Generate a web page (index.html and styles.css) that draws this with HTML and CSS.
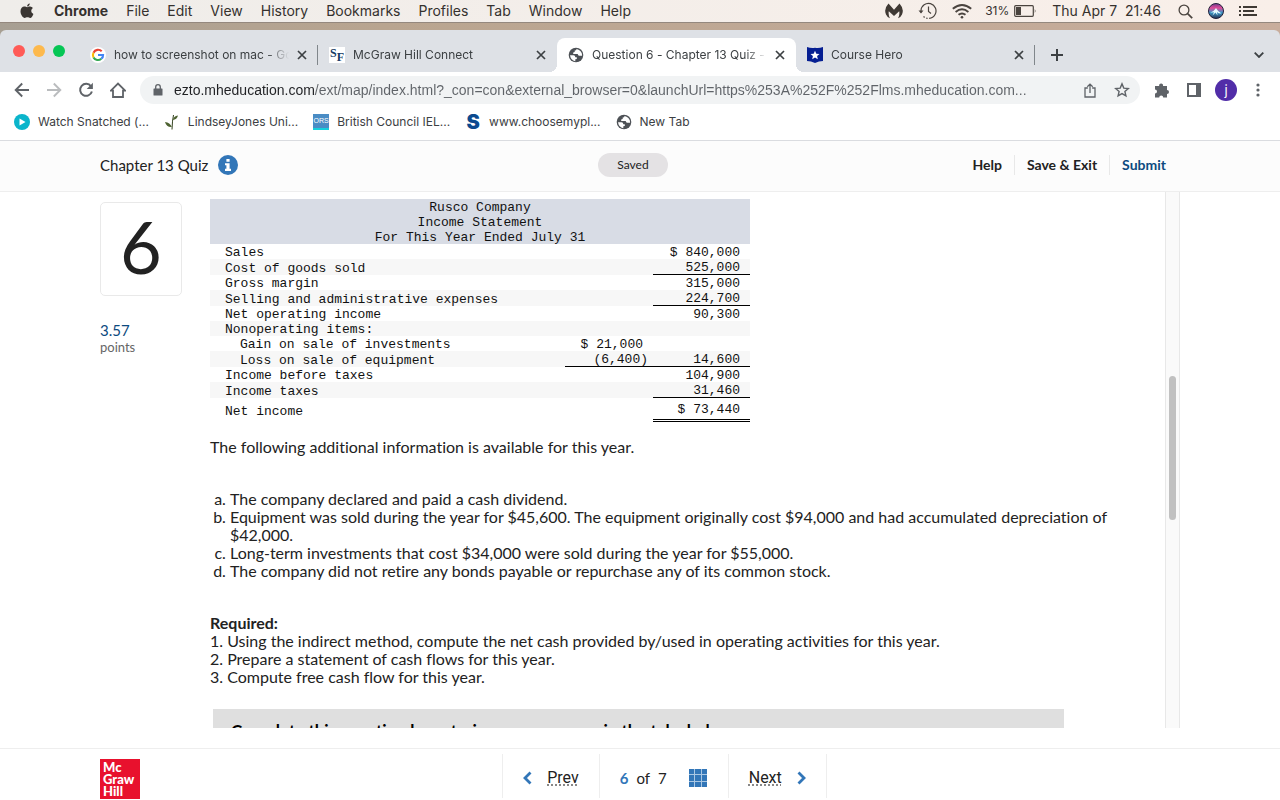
FILE: index.html
```
<!DOCTYPE html>
<html lang="en">
<head>
    <meta charset="UTF-8">
    <meta name="viewport" content="width=device-width, initial-scale=1.0">
    <title>Question 6 - Chapter 13 Quiz</title>
    <link rel="stylesheet" href="styles.css">
</head>
<body>
    <!-- Shared icons -->
    <svg class="defs" width="0" height="0">
        <symbol id="close" viewBox="0 0 10 10"><path d="M1 1l8 8M9 1l-8 8" fill="none" stroke="#3c4043" stroke-width="1.7"/></symbol>
        <symbol id="globe" viewBox="0 0 16 16">
            <circle cx="8" cy="8" r="7.3" fill="#4d5156"/>
            <path d="M2 8.300h3.500q1.800.1 1.800 1.900l1.500.1v1.700l-1.500.3v1.900Q2.800 13.500 2 8.300zM8.600 1.900q-.2 1.700-1.900 1.600v1.600l-1.500.3v1.500h4.500q.3 1.900 1.500 1.800h2.900Q14.200 3.300 8.600 1.900z" fill="#fff"/>
        </symbol>
    </svg>

    <!-- Mac menu bar -->
    <header class="menubar">
        <nav class="menus">
            <svg class="apple" width="14" height="16" viewBox="0 0 14 16" fill="#3a3633"><path d="M9.800.4c.1 1.500-1.200 3-2.700 3C6.900 1.900 8.300.5 9.800.4zM7.200 4.300c.7 0 1.500-.7 2.900-.7 1.200.1 2.200.6 2.800 1.500-2.400 1.500-2 4.800.5 5.800-.7 1.900-1.900 4-3.200 4-1.100 0-1.500-.6-2.800-.6s-1.700.6-2.700.6C2.800 14.900.5 11.600.5 8.300c0-3.100 1.900-4.700 3.800-4.700 1.300 0 2.100.7 2.900.7z"/></svg>
            <button class="app">Chrome</button>
            <button>File</button>
            <button>Edit</button>
            <button>View</button>
            <button>History</button>
            <button>Bookmarks</button>
            <button>Profiles</button>
            <button>Tab</button>
            <button>Window</button>
            <button>Help</button>
        </nav>
        <div class="status">
            <svg width="18" height="16" viewBox="0 0 18 16" fill="#3f3934"><path d="M3.500.5Q-1.500 6 1 11.500q1 2.500 4 3.800-1.900-3.400-1.200-7.100L9 13l5.200-4.800q.7 3.700-1.200 7.100 3-1.300 4-3.800 2.500-5.500-2.500-11L9 6.800z"/></svg>
            <svg class="clock" width="19" height="18" viewBox="0 0 19 18" fill="none" stroke="#4a443f" stroke-width="1.200"><path d="M3 10.500V8.500a7.500 7.500 0 1 1 2.500 6" stroke-dasharray="36 1.500 1.500 1.500"/><path d="M.5 8.500h5L3 11.500z" fill="#4a443f" stroke="none"/><path d="M10.500 4.500v5l2.500 2"/></svg>
            <svg class="wifi" width="20" height="15" viewBox="0 0 20 15" fill="none" stroke="#4a443f" stroke-width="1.900"><path d="M.8 4.800q9.200-7.600 18.400 0M3.600 7.900q6.400-5.200 12.800 0M6.500 10.800q3.500-2.700 7 0"/><circle cx="10" cy="13.200" r="1.300" fill="#4a443f" stroke="none"/></svg>
            <span class="percent">31%</span>
            <svg width="23" height="12" viewBox="0 0 23 12"><rect x=".7" y=".7" width="18.600" height="10.600" rx="1" fill="none" stroke="#4a443f" stroke-width="1.200"/><path d="M2 2h5v8H2zM20.800 4q1.500 2 0 4z" fill="#4a443f"/></svg>
            <span class="date">Thu Apr 7&nbsp; 21:46</span>
            <svg width="15" height="15" viewBox="0 0 15 15" fill="none" stroke="#4a443f" stroke-width="1.300"><circle cx="6" cy="6" r="4.900"/><path d="M9.600 9.600l4.600 4.600" stroke-width="1.700"/></svg>
            <svg class="siri" width="16" height="16" viewBox="0 0 16 16">
                <defs><linearGradient id="siri" x1="0" y1="0" x2="0" y2="1"><stop offset="0" stop-color="#6b3e8f"/><stop offset=".3" stop-color="#e24a98"/><stop offset=".6" stop-color="#3b98c8"/><stop offset="1" stop-color="#26304f"/></linearGradient></defs>
                <circle cx="8" cy="8" r="7.500" fill="url(#siri)" stroke="#22203a"/>
                <path d="M2.500 9.500Q6 8.500 8 5q2 4 5.500 5.500-3.500 0-4.500-1.500l.5 3.500L7.500 9.500 4.500 12.500l1.500-3.200z" fill="#e8fbff"/>
            </svg>
            <svg width="19" height="12" viewBox="0 0 19 12" fill="#3f3934"><path d="M0 1h2v2H0zM0 5h2v2H0zM0 9h2v2H0zM4 1h14v2H4zM4 5h11v2H4zM4 9h14v2H4z"/></svg>
        </div>
    </header>

    <!-- Browser chrome -->
    <section class="browser">
        <div class="tabstrip">
            <div class="lights"><span class="red"></span><span class="yellow"></span><span class="green"></span></div>
            <div class="tab sep">
                <svg width="16" height="16" viewBox="0 0 16 16" fill="none" stroke-width="2.100"><circle cx="8" cy="8" r="8" fill="#fff"/><path d="M11.700 4.300A5.100 5.100 0 0 0 3.500 5.700" stroke="#ea4335"/><path d="M3.500 5.700a5.100 5.100 0 0 0 0 4.700" stroke="#fbbc05"/><path d="M3.500 10.400a5.100 5.100 0 0 0 7.800 1.400" stroke="#34a853"/><path d="M11.300 11.800Q13.200 10.200 13.100 8H8" stroke="#4285f4"/></svg>
                <span class="name">how to screenshot on mac - Google Search</span>
                <button aria-label="Close tab"><svg width="10" height="10"><use href="#close"/></svg></button>
            </div>
            <div class="tab">
                <span class="sf"><span>S</span><span class="f">F</span></span>
                <span class="name">McGraw Hill Connect</span>
                <button aria-label="Close tab"><svg width="10" height="10"><use href="#close"/></svg></button>
            </div>
            <div class="tab active">
                <svg width="16" height="16"><use href="#globe"/></svg>
                <span class="name">Question 6 - Chapter 13 Quiz - Connect</span>
                <button aria-label="Close tab"><svg width="10" height="10"><use href="#close"/></svg></button>
            </div>
            <div class="tab sep">
                <svg width="16" height="16" viewBox="0 0 16 16"><path d="M0 0q4 1.500 8 .8Q12 1.500 16 0v14q-4 0-8 2-4-2-8-2z" fill="#061f92"/><path d="M8 3.800l1.300 2.900 3.200.3-2.400 2.100.7 3.100L8 10.600l-2.800 1.600.7-3.100L3.500 7l3.200-.3z" fill="#fff"/></svg>
                <span class="name">Course Hero</span>
                <button aria-label="Close tab"><svg width="10" height="10"><use href="#close"/></svg></button>
            </div>
            <button class="newtab" aria-label="New tab"><svg width="12" height="12" viewBox="0 0 12 12"><path d="M6 0v12M0 6h12" stroke="#3c4043" stroke-width="2"/></svg></button>
            <button class="tabsearch" aria-label="Search tabs"><svg width="10" height="6" viewBox="0 0 10 6"><path d="M.7.7L5 5 9.300.7" fill="none" stroke="#3c4043" stroke-width="1.800"/></svg></button>
        </div>

        <div class="toolbar">
            <button aria-label="Back"><svg width="16" height="16" viewBox="0 0 16 16" fill="none" stroke="#5f6368" stroke-width="1.900"><path d="M15 8H2M8.200 1.500L1.700 8l6.500 6.500"/></svg></button>
            <button aria-label="Forward"><svg width="16" height="16" viewBox="0 0 16 16" fill="none" stroke="#babcbe" stroke-width="1.900"><path d="M1 8h13M7.800 1.500L14.300 8l-6.500 6.500"/></svg></button>
            <button aria-label="Reload"><svg width="16" height="16" viewBox="0 0 16 16"><path d="M13 4.300A6 6 0 1 0 13.900 9.500" fill="none" stroke="#5f6368" stroke-width="2"/><path d="M14.900.8V7H8.700z" fill="#5f6368"/></svg></button>
            <button aria-label="Home"><svg width="16" height="16" viewBox="0 0 16 16"><path d="M.9 8.600L8 1.500l7.100 7.100H13V15H3V8.600z" fill="none" stroke="#5f6368" stroke-width="1.800"/></svg></button>
            <div class="omnibox">
                <svg width="10" height="12" viewBox="0 0 10 12"><path d="M1 4.500h8q.5 0 .5.500v6q0 .5-.5.500H1q-.5 0-.5-.500V5q0-.500.5-.500z" fill="#5f6368"/><path d="M2.700 5V3a2.300 2.300 0 0 1 4.600 0v2" fill="none" stroke="#5f6368" stroke-width="1.300"/></svg>
                <input type="text" aria-label="Address" value="ezto.mheducation.com/ext/map/index.html?_con=con&amp;external_browser=0&amp;launchUrl=https%253A%252F%252Flms.mheducation.com...">
                <button aria-label="Share"><svg width="12" height="15" viewBox="0 0 12 15" fill="none" stroke="#5f6368" stroke-width="1.300"><path d="M3.800 5H1v9h10V5H8.200M6 10V1.200M3.300 3.800L6 1.100l2.700 2.700"/></svg></button>
                <button aria-label="Bookmark"><svg width="16" height="16" viewBox="0 0 16 16"><path d="M8 1.900l1.800 4.200 4.500.4-3.400 3 1 4.400L8 11.600l-3.900 2.300 1-4.400-3.400-3 4.500-.4z" fill="none" stroke="#5f6368" stroke-width="1.400"/></svg></button>
            </div>
            <button aria-label="Extensions"><svg width="16" height="16" viewBox="0 0 16 16"><path d="M1 4h4.200a2 2 0 1 1 3.800 0H13v4a2 2 0 1 1 0 4v3.500H9.200a2 2 0 1 0-4 0H1v-4a2 2 0 1 0 0-4z" fill="#5f6368"/></svg></button>
            <button aria-label="Side panel"><svg width="14" height="14" viewBox="0 0 14 14"><path d="M0 0h14v14H0zM2 2v10h7V2z" fill="#5f6368" fill-rule="evenodd"/></svg></button>
            <button class="avatar" aria-label="Profile">j</button>
            <button aria-label="Menu"><svg width="4" height="14" viewBox="0 0 4 14" fill="#5f6368"><circle cx="2" cy="2" r="1.600"/><circle cx="2" cy="7" r="1.600"/><circle cx="2" cy="12" r="1.600"/></svg></button>
        </div>

        <nav class="bookmarks">
            <a href="#"><svg width="16" height="16" viewBox="0 0 16 16"><circle cx="8" cy="8" r="8" fill="#0bb5cb"/><path d="M5.500 4.500v7l6-3.500z" fill="#fff"/></svg><span>Watch Snatched (...</span></a>
            <a href="#"><svg width="16" height="16" viewBox="0 0 16 16"><path d="M8 15.500Q8.300 6 9.500 1" fill="none" stroke="#34421f"/><path d="M1 8q5 .5 6.800 5Q2.500 13.500 1 8zM8.800 6Q9.500 2 14 1.500 13 5.500 8.800 6z" fill="#4d6231"/></svg><span>LindseyJones Uni...</span></a>
            <a href="#"><span class="ors">ORS</span><span>British Council IEL...</span></a>
            <a href="#"><span class="s-logo">S</span><span>www.choosemypl...</span></a>
            <a href="#"><svg width="16" height="16"><use href="#globe"/></svg><span>New Tab</span></a>
        </nav>
    </section>

    <!-- Quiz header -->
    <header class="quiz-header">
        <div class="wrap">
            <div class="title">
                <h1>Chapter 13 Quiz</h1>
                <button aria-label="Info"><svg width="20" height="20" viewBox="0 0 20 20"><circle cx="10" cy="10" r="10" fill="#3276b8"/><path d="M8.400 4h3.200v2.700H8.400zM7 8.200h4.600v5.600H13V16H7v-2.200h1.400v-3.500H7z" fill="#fff"/></svg></button>
            </div>
            <span class="saved">Saved</span>
            <nav class="actions">
                <a href="#">Help</a>
                <a href="#">Save &amp; Exit</a>
                <a href="#" class="submit">Submit</a>
            </nav>
        </div>
    </header>

    <main class="wrap quiz">
        <aside>
            <div class="number">6</div>
            <div class="score">3.57</div>
            <div class="points">points</div>
        </aside>

        <article>
            <table>
                <thead>
                    <tr><th colspan="3">Rusco Company</th></tr>
                    <tr><th colspan="3">Income Statement</th></tr>
                    <tr><th colspan="3">For This Year Ended July 31</th></tr>
                </thead>
                <tbody>
                    <tr><td>Sales</td><td></td><td>$ 840,000</td></tr>
                    <tr><td>Cost of goods sold</td><td></td><td class="line">525,000</td></tr>
                    <tr><td>Gross margin</td><td></td><td>315,000</td></tr>
                    <tr><td>Selling and administrative expenses</td><td></td><td class="line">224,700</td></tr>
                    <tr><td>Net operating income</td><td></td><td>90,300</td></tr>
                    <tr><td>Nonoperating items:</td><td></td><td></td></tr>
                    <tr><td class="indent">Gain on sale of investments</td><td>$ 21,000</td><td></td></tr>
                    <tr><td class="indent">Loss on sale of equipment</td><td class="line negative">(6,400)</td><td class="line">14,600</td></tr>
                    <tr><td>Income before taxes</td><td></td><td>104,900</td></tr>
                    <tr><td>Income taxes</td><td></td><td class="line">31,460</td></tr>
                    <tr><td>Net income</td><td></td><td class="double">$ 73,440</td></tr>
                </tbody>
            </table>

            <p class="intro">The following additional information is available for this year.</p>

            <ol class="info">
                <li>The company declared and paid a cash dividend.</li>
                <li>Equipment was sold during the year for $45,600. The equipment originally cost $94,000 and had accumulated depreciation of $42,000.</li>
                <li>Long-term investments that cost $34,000 were sold during the year for $55,000.</li>
                <li>The company did not retire any bonds payable or repurchase any of its common stock.</li>
            </ol>

            <p class="required">
                <strong>Required:</strong><br>
                1. Using the indirect method, compute the net cash provided by/used in operating activities for this year.<br>
                2. Prepare a statement of cash flows for this year.<br>
                3. Compute free cash flow for this year.
            </p>

            <div class="complete">Complete this question by entering your answers in the tabs below.</div>
        </article>

        <div class="scrollbar"><div class="thumb"></div></div>
    </main>

    <footer>
        <div class="wrap">
            <a href="#" class="logo">Mc<br>Graw<br>Hill</a>
            <nav class="pager">
                <a href="#"><svg width="9" height="14" viewBox="0 0 9 14"><path d="M7.500 1.500L2 7l5.500 5.500" fill="none" stroke="#3276b8" stroke-width="2.800"/></svg><span>Prev</span></a>
                <div class="count"><b>6</b><span>of</span><span>7</span>
                    <button aria-label="Question list"><svg width="18" height="18" viewBox="0 0 18 18"><path d="M0 0h18v18H0z" fill="#a9c7e3"/><path d="M0 0h5v5H0zM6 0h6v5H6zM13 0h5v5h-5zM0 6h5v6H0zM6 6h6v6H6zM13 6h5v6h-5zM0 13h5v5H0zM6 13h6v5H6zM13 13h5v5h-5z" fill="#3276b8"/></svg></button>
                </div>
                <a href="#"><span>Next</span><svg width="9" height="14" viewBox="0 0 9 14"><path d="M1.500 1.500L7 7l-5.500 5.500" fill="none" stroke="#3276b8" stroke-width="2.800"/></svg></a>
            </nav>
        </div>
    </footer>
</body>
</html>
```
FILE: styles.css
```
* {
    box-sizing: border-box;
}
body {
    margin: 0;
    height: 100vh;
    display: flex;
    flex-direction: column;
    overflow: hidden;
    font-family: Lato, sans-serif;
    font-size: 16px;
    line-height: 18px;
    font-variant-ligatures: none;
    color: #222222;
    background-color: #ffffff;
}
button {
    display: flex;
    align-items: center;
    justify-content: center;
    margin: 0;
    padding: 0;
    border: none;
    background: none;
    font: inherit;
    color: inherit;
    cursor: pointer;
}
svg {
    flex: none;
    display: block;
}
a {
    color: inherit;
    text-decoration: none;
}
.defs {
    position: absolute;
}

/* menu bar */
.menubar {
    flex: none;
    height: 23px;
    display: flex;
    justify-content: space-between;
    padding: 0 22px 0 20px;
    border-bottom: 1px solid #94887e;
    background: linear-gradient(to right, #efedea, #f9efe9);
    font-family: Inter, sans-serif;
    font-size: 14px;
    color: #35312e;
}
.menus, .status {
    display: flex;
    align-items: center;
}
.menus {
    gap: 18px;
}
.menus .app {
    margin-left: 2px;
    font-weight: bold;
}
.status {
    gap: 15px;
}
.wifi {
    margin-right: -2px;
}
.percent {
    margin-right: -10px;
    font-size: 12px;
}
.date {
    margin-right: 2px;
}

/* browser */
.browser {
    flex: none;
    padding-top: 7px;
    background: linear-gradient(to right, #a79f93, #b9a590 30%, #c8ad9c);
    font-family: Inter, sans-serif;
    color: #3c4043;
}
.tabstrip {
    height: 42px;
    display: flex;
    padding: 8px 16px 0 13px;
    border-radius: 6px 6px 0 0;
    background-color: #dee1e6;
    font-size: 12px;
}
.lights {
    flex: none;
    width: 66px;
    display: flex;
    gap: 8px;
    padding-top: 7px;
}
.lights span {
    width: 12px;
    height: 12px;
    border-radius: 50%;
}
.lights .red {
    background-color: #ff5b57;
}
.lights .yellow {
    background-color: #fdb94d;
}
.lights .green {
    background-color: #05c655;
}
.tab {
    flex: 0 1 239px;
    min-width: 0;
    display: flex;
    align-items: center;
    gap: 8px;
    padding: 0 11px;
    position: relative;
}
.tab.active {
    border-radius: 8px 8px 0 0;
    background-color: #ffffff;
}
.tab.active::before, .tab.active::after {
    content: "";
    position: absolute;
    bottom: 0;
    width: 8px;
    height: 8px;
}
.tab.active::before {
    right: 100%;
    background: radial-gradient(circle at 0 0, transparent 8px, #ffffff 8px);
}
.tab.active::after {
    left: 100%;
    background: radial-gradient(circle at 100% 0, transparent 8px, #ffffff 8px);
}
.tab.sep::after {
    content: "";
    position: absolute;
    right: 0;
    top: 7px;
    width: 1px;
    height: 20px;
    background-color: #80868b;
}
.tab .name {
    flex: 1;
    overflow: hidden;
    white-space: nowrap;
    -webkit-mask-image: linear-gradient(to right, #000 calc(100% - 22px), transparent);
    mask-image: linear-gradient(to right, #000 calc(100% - 22px), transparent);
}
.sf {
    width: 16px;
    height: 16px;
    display: flex;
    justify-content: center;
    background-color: #ffffff;
    font-family: "Liberation Serif", serif;
    font-size: 12px;
    line-height: 12px;
    font-weight: bold;
    color: #163a63;
}
.sf .f {
    padding-top: 4px;
}
.newtab {
    width: 44px;
}
.tabsearch {
    margin-left: auto;
}
.toolbar {
    height: 36px;
    display: flex;
    align-items: center;
    gap: 8px;
    padding: 0 10px;
    background-color: #ffffff;
}
.toolbar button {
    flex: none;
    width: 24px;
    height: 24px;
}
.omnibox {
    flex: 1;
    height: 28px;
    display: flex;
    align-items: center;
    gap: 8px;
    margin: 0 2px;
    padding: 0 6px 0 13px;
    border-radius: 14px;
    background-color: #f1f3f4;
}
.omnibox input {
    flex: 1;
    min-width: 0;
    margin-left: 3px;
    padding: 0;
    border: none;
    outline: none;
    font-family: "Liberation Sans", sans-serif;
    font-size: 14px;
    /* host is darker than the rest of the address */
    color: transparent;
    background: linear-gradient(to right, #202124 141px, #5f6368 141px);
    -webkit-background-clip: text;
    background-clip: text;
}
.toolbar .avatar {
    width: 22px;
    height: 22px;
    margin: 0 1px;
    border-radius: 50%;
    background-color: #512da8;
    color: #ffffff;
    font-size: 13px;
}
.bookmarks {
    height: 33px;
    display: flex;
    gap: 15px;
    padding: 0 14px 5px;
    border-bottom: 1px solid #dadce0;
    background-color: #ffffff;
    font-size: 12px;
}
.bookmarks a {
    display: flex;
    align-items: center;
    gap: 8px;
}
.ors {
    width: 16px;
    height: 16px;
    border-bottom: 2px solid #16d0dd;
    background-color: #4a8cc4;
    color: #ffffff;
    font-family: "Liberation Sans", sans-serif;
    font-size: 7px;
    line-height: 14px;
    text-align: center;
}
.s-logo {
    width: 16px;
    font-size: 20px;
    font-weight: 900;
    color: #0b4a8f;
    text-align: center;
}

/* quiz */
.wrap {
    width: 100%;
    max-width: 1080px;
    margin: 0 auto;
}
.quiz-header {
    flex: none;
    border-bottom: 1px solid #eeeeee;
    background-color: #fcfcfc;
}
.quiz-header .wrap {
    height: 50px;
    display: grid;
    grid-template-columns: 1fr auto 1fr;
    align-items: center;
    padding: 0 14px 2px 0;
}
.title {
    display: flex;
    align-items: center;
    gap: 10px;
}
.title h1 {
    margin: 0;
    font-size: 15px;
    font-weight: normal;
}
.saved {
    padding: 3px 19px;
    border-radius: 12px;
    background-color: #e4e2e4;
    font-size: 12px;
}
.actions {
    display: flex;
    justify-content: flex-end;
    font-size: 14px;
    font-weight: bold;
}
.actions a {
    padding: 1px 12px;
}
.actions a + a {
    border-left: 1px solid #e8e8e8;
}
.actions .submit {
    padding-right: 0;
    color: #0d4a80;
}
.quiz {
    flex: 1;
    min-height: 0;
    display: flex;
    overflow: hidden;
}
aside {
    flex: none;
    width: 110px;
    padding-top: 10px;
}
.number {
    width: 82px;
    height: 94px;
    margin-bottom: 25px;
    border: 1px solid #e9e9e9;
    border-radius: 5px;
    font-size: 72px;
    line-height: 86px;
    text-align: center;
}
.score {
    font-size: 15px;
    color: #0d4a80;
}
.points {
    font-size: 13px;
    line-height: 16px;
    color: #666666;
}
article {
    flex: 1;
    padding: 7px 10px 0 0;
}
table {
    width: 540px;
    max-width: 100%;
    border-spacing: 0;
    font-family: "Liberation Mono", monospace;
    font-size: 13px;
    line-height: 13px;
    color: #111111;
}
thead {
    background-color: #d8dce5;
}
th {
    padding: 2px 0 0;
    font-weight: normal;
    text-align: center;
}
td {
    height: 15px;
    padding: 2px 10px 0 0;
    text-align: right;
}
td:first-child {
    padding-left: 15px;
    text-align: left;
}
td:nth-child(2) {
    width: 88px;
}
td:nth-child(3) {
    width: 97px;
}
td.indent:first-child {
    padding-left: 30px;
}
td.negative {
    padding-right: 5px;
}
tbody tr:nth-child(even) {
    background-color: #f7f7f7;
}
td.line {
    border-bottom: 1px solid #000000;
}
td.double {
    padding-top: 5px;
    padding-bottom: 3px;
    border-bottom: 3px double #000000;
}
.intro {
    margin: 16px 0 34px;
}
.info {
    margin: 0 0 34px;
    padding-left: 20px;
    list-style: lower-alpha;
}
.required {
    margin: 0 0 23px;
}
.complete {
    width: 851px;
    max-width: 100%;
    margin-left: 3px;
    padding: 13px 18px;
    background-color: #dfdfdf;
    font-size: 17px;
    font-weight: bold;
    color: #000000;
}
.scrollbar {
    flex: none;
    width: 15px;
    padding: 184px 3px 0;
    border: solid #e8e8e8;
    border-width: 0 1px;
    background-color: #fafafa;
}
.thumb {
    height: 144px;
    border-radius: 4px;
    background-color: #c1c1c1;
}

/* footer */
footer {
    flex: none;
    height: 52px;
    margin-top: 20px;
    border-top: 1px solid #eeeeee;
}
footer .wrap {
    display: grid;
    grid-template-columns: 1fr auto 1fr;
}
.logo {
    width: 40px;
    height: 40px;
    margin-top: 10px;
    padding: 2px 0 0 3px;
    background-color: #e8112d;
    color: #ffffff;
    font-size: 13px;
    line-height: 12px;
    font-weight: 900;
}
.pager {
    height: 44px;
    display: flex;
    margin: 5px 0 0 49px;
    border: solid #eeeeee;
    border-width: 0 1px;
}
.pager a {
    display: flex;
    align-items: center;
    gap: 15px;
    padding: 4px 20px 0;
}
.pager a span {
    font-family: Roboto, sans-serif;
    text-decoration: underline dotted #888888 2px;
    text-decoration-skip-ink: none;
    text-underline-offset: 1px;
}
.count {
    display: flex;
    align-items: center;
    gap: 8px;
    padding: 4px 21px 0 20px;
    border: solid #eeeeee;
    border-width: 0 1px;
    font-size: 15px;
}
.count b {
    color: #3276b8;
}
.count button {
    margin-left: 14px;
}
```
